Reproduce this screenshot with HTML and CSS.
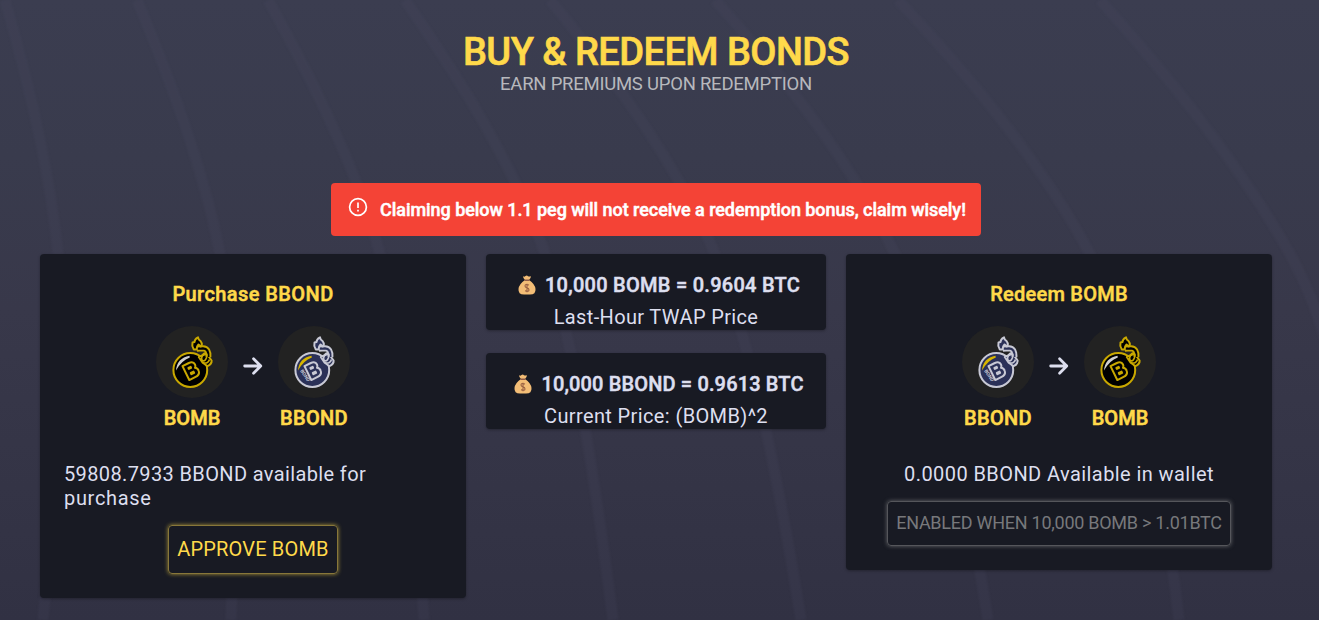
FILE: index.html
```html
<!DOCTYPE html>
<html lang="en">
<head>
<meta charset="utf-8">
<title>Buy &amp; Redeem Bonds</title>
<link rel="stylesheet" href="styles.css">
</head>
<body>
<svg class="backdrop" viewBox="0 0 1319 620" preserveAspectRatio="none" aria-hidden="true">
  <path d="M5 0Q48 150 58 254T43 620M137 0Q200 150 220 254T231 620M268 0Q352 150 380 254T424 620M405 0Q510 150 545 254T613 620M550 0Q670 145 715 254T801 620M715 0Q842 140 895 254T988 620M898 0Q1030 140 1090 254T1179 620M1100 0Q1226 140 1290 254T1370 620"/>
</svg>
<svg class="symbols" aria-hidden="true">
  <defs>
    <symbol id="bomb" viewBox="0 0 72 72">
      <circle class="disc" cx="36" cy="36" r="36"/>
      <circle class="shell" cx="34.300" cy="44" r="16.900"/>
      <path class="shine" d="M20 44.500Q21 32 33.500 29.700L33.800 31.500Q25.500 34.500 20 44.500Z"/>
      <path class="collar" d="M42.800 31L50.500 27.500L55.600 34.500Q56 38 51.500 40.200L46.500 36.500Z"/>
      <path class="fuse" d="M40.800 22.700L47 22.300Q53 22.500 52.400 31"/>
      <path class="fuse-core" d="M41.500 22.700L47 22.300Q53 22.500 52.400 31"/>
      <ellipse class="link" cx="48.300" cy="31" rx="2.300" ry="4" transform="rotate(20 48.300 31)"/>
      <path class="link" d="M46.500 36.500Q52 38.500 53.500 33.500"/>
      <path class="flame" d="M37.800 23.500Q35.500 20 36.500 16.500L38.500 16Q38.500 13 42 11.300Q42.300 13.500 44.500 15Q47 18.500 44.800 20.500L42.500 18.500Q40.500 20.500 40.500 23.500Z"/>
      <g class="letter" transform="rotate(-26 34.500 44)"><path d="M29 37H35.500Q41 37 41 41Q41 43 39.500 44Q42 45.500 41.500 48.500Q41 52.500 35.500 52.500H29Z"/><path d="M33.500 41.300H36V42.300H33.500ZM33.500 46.800H36.500V48.200H33.500Z"/></g>
      <text class="wordmark" transform="translate(22 45) rotate(55)">BOND</text>
    </symbol>
    <symbol id="arrow" viewBox="0 0 18 18"><path d="M1.500 9H16M9.500 2.500L16 9L9.500 15.500"/></symbol>
    <symbol id="bag" viewBox="0 0 18 20">
      <path fill="#f3bd76" d="M5 1Q6 2.300 7.500 1Q9 0 10 1.300Q12 2 13 1Q13 3 11 5Q17 9 17.500 14Q18 19.500 12 19.500H6Q0 19.500 .5 14Q1 9 7 5Q5 3.500 5 1Z"/>
      <path d="M6.500 4.500H11.500V6H6.500Z" fill="#8e5b46"/>
      <path d="M11 10Q7 8.500 7 11Q7 12.200 9 12.800Q11 13.500 11 15Q11 17 7 15.700M9 8.700V17.300" fill="none" stroke="#9a6143" stroke-width="1.100"/>
    </symbol>
  </defs>
</svg>
<main class="page">
  <header class="heading">
    <h1 class="title">BUY &amp; REDEEM BONDS</h1>
    <p class="subtitle">EARN PREMIUMS UPON REDEMPTION</p>
  </header>
  <div class="alert">
    <svg class="alert-icon" viewBox="0 0 20 20"><circle cx="10" cy="10" r="8.400"/><path d="M10 5.500V11M10 12.800V14.500"/></svg>
    <span class="alert-text">Claiming below 1.1 peg will not receive a redemption bonus, claim wisely!</span>
  </div>
  <section class="columns">
    <article class="card">
      <h2 class="card-title t-purchase">Purchase BBOND</h2>
      <div class="swap">
        <div class="token"><svg class="coin gold"><use href="#bomb"/></svg><span class="token-name n-bomb">BOMB</span></div>
        <svg class="arrow"><use href="#arrow"/></svg>
        <div class="token"><svg class="coin silver"><use href="#bomb"/></svg><span class="token-name n-bbond">BBOND</span></div>
      </div>
      <p class="note note-left">59808.7933 BBOND available for<br><span class="last-word">purchase</span></p>
      <button class="button approve"><span>APPROVE BOMB</span></button>
    </article>
    <div class="prices">
      <article class="price">
        <p class="rate"><svg class="bag"><use href="#bag"/></svg><span class="r-bomb">10,000 BOMB = 0.9604 BTC</span></p>
        <p class="caption c-twap"><span>Last-Hour TWAP Price</span></p>
      </article>
      <article class="price">
        <p class="rate"><svg class="bag"><use href="#bag"/></svg><span class="r-bbond">10,000 BBOND = 0.9613 BTC</span></p>
        <p class="caption c-current"><span>Current Price: (BOMB)^2</span></p>
      </article>
    </div>
    <article class="card">
      <h2 class="card-title t-redeem">Redeem BOMB</h2>
      <div class="swap">
        <div class="token"><svg class="coin silver"><use href="#bomb"/></svg><span class="token-name n-bbond">BBOND</span></div>
        <svg class="arrow"><use href="#arrow"/></svg>
        <div class="token"><svg class="coin gold"><use href="#bomb"/></svg><span class="token-name n-bomb">BOMB</span></div>
      </div>
      <p class="note note-center">0.0000 BBOND Available in wallet</p>
      <button class="button locked" disabled><span>ENABLED WHEN 10,000 BOMB &gt; 1.01BTC</span></button>
    </article>
  </section>
</main>
</body>
</html>
```
FILE: styles.css
```css
* { box-sizing: border-box; }
body {
  margin: 0;
  height: 620px;
  overflow: hidden;
  position: relative;
  background: linear-gradient(180deg, #3b3d50 0%, #393b4d 25%, #38384a 50%, #313143 100%);
  color: #dddfef;
  font-family: Roboto, "Liberation Sans", sans-serif;
}
h1, h2, p { margin: 0; }
.backdrop { position: absolute; inset: 0; width: 100%; height: 100%; }
.backdrop path { fill: none; stroke: rgba(76, 79, 99, .17); stroke-width: 11; filter: blur(1px); }
.symbols { position: absolute; width: 0; height: 0; }
.page { position: relative; width: 1232px; margin-left: 40px; padding-top: 30px; }
.heading { height: 153px; text-align: center; white-space: nowrap; }
.title { font-size: 38px; line-height: 44px; font-weight: 500; color: #ffd94a; letter-spacing: -.55px; -webkit-text-stroke: .6px; }
.subtitle { font-size: 18.500px; line-height: 20px; color: #b7b8bd; letter-spacing: -.24px; }
.alert {
  width: 650px; height: 53px; margin: 0 auto 18px; padding: 0 0 0 17px;
  display: flex; align-items: center; gap: 12px;
  border-radius: 4px; background: #f44336; color: #fff; white-space: nowrap;
}
.alert-icon { width: 20px; height: 20px; margin-bottom: 5px; fill: none; stroke: #fff; stroke-width: 1.700; }
.alert-text { font-size: 18px; font-weight: 500; letter-spacing: -.05px; -webkit-text-stroke: .5px; }
.columns { display: grid; grid-template-columns: 426px 340px 426px; gap: 20px; align-items: start; }
.card, .price { background: #181a23; border-radius: 4px; box-shadow: 0 1px 3px rgba(0, 0, 0, .3); }
.card { display: flex; flex-direction: column; align-items: center; padding: 28px 24px 24px; }
.card-title { font-size: 20px; line-height: 24px; font-weight: 500; color: #ffd94a; -webkit-text-stroke: .5px; }
.t-purchase { letter-spacing: .42px; }
.t-redeem { letter-spacing: .25px; }
.swap { display: flex; justify-content: center; gap: 15px; margin-top: 20px; }
.token { display: flex; flex-direction: column; align-items: center; width: 72px; }
.coin { width: 72px; height: 72px; }
.token-name { margin-top: 8px; font-size: 20px; line-height: 24px; font-weight: 500; color: #ffd94a; -webkit-text-stroke: .6px; }
.n-bbond { letter-spacing: .35px; }
.arrow { width: 20px; height: 20px; margin-top: 30px; fill: none; stroke: #dddfef; stroke-width: 2.500; stroke-linecap: round; stroke-linejoin: round; }
.disc { fill: #222; }
.gold { --line: #c9a800; --body: #000; --shine: #cfcfcf; --word: transparent; }
.silver { --line: #c8c9d5; --body: #2b3158; --shine: #d7b500; --word: #c8c9d5; }
.shell, .collar, .flame { fill: var(--body); stroke: var(--line); stroke-width: 2; stroke-linejoin: round; }
.shine { fill: var(--shine); }
.link { fill: none; stroke: var(--line); stroke-width: 1.600; }
.fuse { fill: none; stroke: var(--line); stroke-width: 6; }
.fuse-core { fill: none; stroke: var(--body); stroke-width: 2.200; }
.letter path { fill: var(--body); stroke: var(--line); stroke-width: 2; stroke-linejoin: round; }
.wordmark { font: bold 5px Roboto, sans-serif; fill: var(--word); }
.note { margin-top: 32px; font-size: 20px; line-height: 24px; white-space: nowrap; }
.note-left { align-self: flex-start; letter-spacing: .37px; }
.last-word { letter-spacing: .68px; }
.note-center { letter-spacing: .42px; }
.button { padding: 0; border-radius: 4px; background: transparent; font-family: inherit; white-space: nowrap; }
.approve { width: 170px; height: 49px; margin-top: 15px; border: 1px solid #88773a; box-shadow: 0 0 4px #aa9439; color: #ffd94a; font-size: 20px; line-height: 22px; padding-bottom: 1px; letter-spacing: .16px; }
.locked { width: 344px; height: 45px; margin-top: 15px; border: 1px solid #55565b; box-shadow: 0 0 4px #66676c; color: #77787b; font-size: 18px; padding-bottom: 2px; letter-spacing: -.26px; }
.prices { display: grid; gap: 23px; }
.price { height: 76px; padding-top: 15px; text-align: center; white-space: nowrap; }
.rate { display: flex; justify-content: center; align-items: center; gap: 9px; height: 32px; padding-left: 6px; font-size: 20px; font-weight: 500; -webkit-text-stroke: .5px; }
.r-bomb { letter-spacing: .27px; }
.r-bbond { letter-spacing: .15px; }
.bag { width: 18px; height: 20px; }
.caption { font-size: 20px; line-height: 32px; }
.c-twap { letter-spacing: .36px; }
.c-current { letter-spacing: .38px; }
```
